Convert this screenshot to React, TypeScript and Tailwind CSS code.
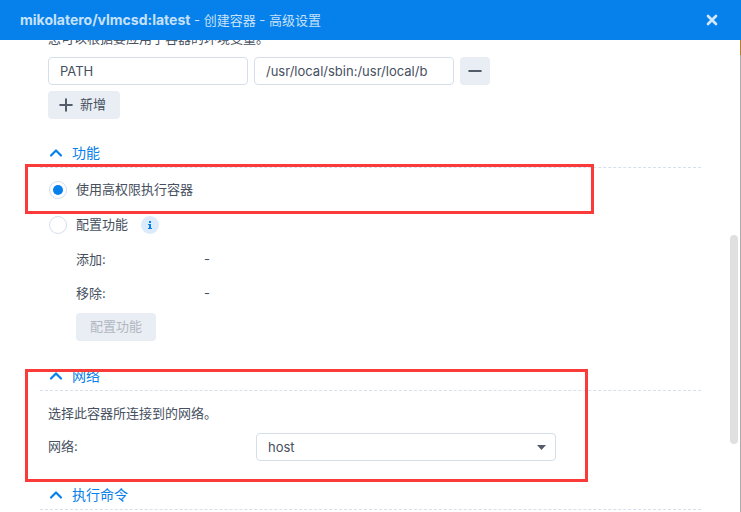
import { ChevronUp, Plus, Minus, X } from 'lucide-react';

const font = 'font-[Inter,"Noto_Sans_CJK_SC",sans-serif]';

function SectionTitle({ title, className }: { title: string; className?: string }) {
    return (
        <div className={`mx-10 flex h-[30px] items-center border-b border-dashed border-[#d5e0ec] pl-[6px] ${className || ''}`}>
            <ChevronUp className="h-5 w-5 text-[#0680ea]" strokeWidth={2.6} />
            <span className="ml-[6px] text-[14px] text-[#0680ea]">{title}</span>
        </div>
    );
}

function Radio({ checked }: { checked?: boolean }) {
    return (
        <span className="flex h-[18px] w-[18px] items-center justify-center rounded-full border border-[#d5dfea] bg-white">
            {checked && <span className="h-[10px] w-[10px] rounded-full bg-[#0680ea]" />}
        </span>
    );
}

export default function App() {
    return (
        <div className={`relative h-[512px] w-[741px] overflow-hidden bg-white text-[13px] text-[#46505e] ${font}`}>
            <div className="relative z-10 flex h-10 items-center justify-between bg-[#0680ea] pl-5 pr-[21px]">
                <div className="text-[13px] text-[#c6e2fb]">
                    <span className="text-[14px] font-bold">mikolatero/vlmcsd:latest</span> - 创建容器 - 高级设置
                </div>
                <X className="h-4 w-4 text-[#d0e7fc]" strokeWidth={4} />
            </div>

            <div className="-mt-[12px] h-[484px] overflow-hidden">
                <p className="h-[20px] pl-12 leading-[20px]">您可以根据要应用于容器的环境变量。</p>

                <div className="mt-[9px] flex gap-[6px] pl-12">
                    <div className="flex h-7 w-[200px] items-center rounded-[4px] border border-[#d5dfea] pl-[11px] pt-px">PATH</div>
                    <div className="flex h-7 w-[200px] items-center overflow-hidden whitespace-nowrap rounded-[4px] border border-[#d5dfea] pl-[11px] pt-px">/usr/local/sbin:/usr/local/b</div>
                    <div className="flex h-7 w-[30px] items-center justify-center rounded-[4px] bg-[#e9edf4]">
                        <Minus className="h-5 w-5 text-[#535c69]" strokeWidth={2.4} />
                    </div>
                </div>
                <div className="ml-12 mt-[6px] flex h-7 w-[72px] items-center gap-[4px] rounded-[4px] bg-[#e9edf4] pl-[8px]">
                    <Plus className="h-5 w-5 text-[#535c69]" strokeWidth={2.4} />
                    <span>新增</span>
                </div>

                <SectionTitle title="功能" className="mt-[19px]" />
                <div className="mt-[12px] flex h-[20px] items-center gap-[9px] pl-[49px]">
                    <Radio checked />
                    <span>使用高权限执行容器</span>
                </div>
                <div className="mt-[15px] flex h-[20px] items-center gap-[9px] pl-[49px]">
                    <Radio />
                    <span>配置功能</span>
                    <span className="ml-[4px] flex h-[18px] w-[18px] items-center justify-center rounded-full bg-[#dcebfb] text-[#0680ea]">
                        <svg width="6" height="8" viewBox="0 0 6 8" fill="currentColor">
                            <rect x="2" y="0" width="2" height="2" />
                            <path d="M1 3h3v4h1v1H1V7h1V4H1z" />
                        </svg>
                    </span>
                </div>
                <div className="mt-[14px] flex h-[20px] items-center pl-[76px] pt-px">
                    <span className="w-[128px]">添加:</span>
                    <span>-</span>
                </div>
                <div className="mt-[14px] flex h-[20px] items-center pl-[76px] pt-px">
                    <span className="w-[128px]">移除:</span>
                    <span>-</span>
                </div>
                <div className="ml-[76px] mt-[10px] flex h-7 w-20 items-center justify-center rounded-[4px] bg-[#e9edf4] text-[#b1b7c0]">配置功能</div>

                <SectionTitle title="网络" className="mt-[20px]" />
                <p className="mt-[12px] h-[20px] pl-12 leading-[20px]">选择此容器所连接到的网络。</p>
                <div className="mt-[10px] flex items-center pl-12">
                    <span className="w-[208px]">网络:</span>
                    <div className="flex h-7 w-[300px] items-center justify-between rounded-[4px] border border-[#d5dfea] pl-[11px] pr-[9px] pt-px">
                        <span>host</span>
                        <svg width="9" height="5" viewBox="0 0 9 5" className="text-[#535c69]">
                            <path d="M0 0h9L4.5 5z" fill="currentColor" />
                        </svg>
                    </div>
                </div>

                <SectionTitle title="执行命令" className="mt-[19px]" />
            </div>

            {/* scrollbar */}
            <div className="absolute left-[730px] top-[235px] h-[209px] w-2 rounded-[4px] bg-[#e0e0e0]" />

            {/* edge of the window behind the dialog */}
            <div className="absolute left-[740px] top-[40px] h-[15px] w-px bg-[#b5802f]" />
            <div className="absolute left-[740px] top-[55px] h-[457px] w-px bg-[#ababab]" />

            {/* annotation boxes */}
            <div className="absolute left-[25px] top-[164px] h-[50px] w-[569px] border-[3px] border-[#fb3a3a]" />
            <div className="absolute left-[25px] top-[369px] h-[113px] w-[563px] border-[3px] border-[#fb3a3a]" />
        </div>
    );
}
